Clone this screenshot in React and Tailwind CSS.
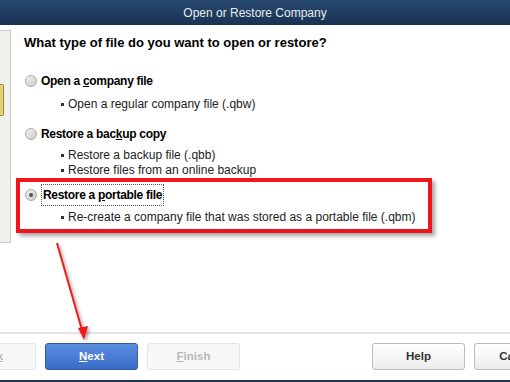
import React from 'react'

function Radio({ checked }) {
  return (
    <span className="w-[12px] h-[12px] rounded-full border border-[#a9a9a9] bg-gradient-to-br from-[#f4f4f4] to-[#c9c9c9] flex items-center justify-center shrink-0">
      {checked && <span className="w-[4px] h-[4px] rounded-full bg-[#555]" />}
    </span>
  )
}

function Bullet({ children }) {
  return (
    <div className="flex items-center gap-[4px] text-[12px] text-[#222] leading-[15px]">
      <span className="w-[3px] h-[3px] bg-[#333] inline-block" />
      <span>{children}</span>
    </div>
  )
}

function Btn({ children, variant, className }) {
  const base = 'h-[27px] rounded-[3px] flex items-center justify-center text-[11.5px] font-bold shrink-0'
  const styles = {
    primary: 'bg-gradient-to-b from-[#5b8ee0] to-[#3a6cc8] border border-[#2e5aa8] text-white',
    disabled: 'bg-[#f7f7f7] border border-[#e4e4e4] text-[#b8b8b8]',
    normal: 'bg-gradient-to-b from-[#ffffff] to-[#ececec] border border-[#bcbcbc] text-[#333]',
  }
  return <div className={`${base} ${styles[variant]} ${className || 'w-[93px]'}`}>{children}</div>
}

export default function App() {
  return (
    <div
      className="relative w-[510px] h-[382px] overflow-hidden bg-white flex flex-col"
      style={{ fontFamily: '"Liberation Sans", Arial, sans-serif' }}
    >
      <div className="h-[25px] shrink-0 bg-gradient-to-b from-[#284a70] to-[#1a3252] flex items-center justify-center text-[12px] text-[#e8ecf0]">
        Open or Restore Company
      </div>

      <div className="flex flex-1">
        <div className="w-[11px] h-[213px] mt-[5px] bg-[#eef1ec] border border-l-0 border-[#c9ccc6] relative shrink-0">
          <div className="absolute left-0 top-[53px] w-[4px] h-[32px] bg-[#e4cf7a] border border-l-0 border-[#9d8630] rounded-r-[2px]" />
        </div>

        <div className="flex flex-col pl-[5px]">
          <div className="pl-[8px] pt-[10px] text-[13px] font-bold text-black leading-[16px]">
            What type of file do you want to open or restore?
          </div>

          <div className="pl-[9px] mt-[21px] flex items-center gap-[4px]">
            <Radio />
            <span className="text-[12px] font-bold text-black tracking-[-0.3px]">
              Open a <u>c</u>ompany file
            </span>
          </div>
          <div className="pl-[45px] mt-[7px]">
            <Bullet>Open a regular company file (.qbw)</Bullet>
          </div>

          <div className="pl-[9px] mt-[13px] flex items-center gap-[4px]">
            <Radio />
            <span className="text-[12px] font-bold text-black tracking-[-0.3px]">
              Restore a bac<u>k</u>up copy
            </span>
          </div>
          <div className="pl-[45px] mt-[5px]">
            <Bullet>Restore a backup file (.qbb)</Bullet>
            <Bullet>Restore files from an online backup</Bullet>
          </div>

          <div className="mt-0 w-[416px] h-[55px] border-[4px] border-[#f0141c] shadow-[3px_3px_4px_rgba(0,0,0,0.35)] flex flex-col">
            <div className="pl-[5px] mt-[2px] flex items-center gap-[4px]">
              <Radio checked />
              <span className="text-[12px] font-bold text-black tracking-[-0.3px] border border-dotted border-[#555] px-[1px] h-[22px] leading-[20px]">
                Restore a <u>p</u>ortable file
              </span>
            </div>
            <div className="pl-[41px] mt-[4px]">
              <Bullet>Re-create a company file that was stored as a portable file (.qbm)</Bullet>
            </div>
          </div>
        </div>
      </div>

      <div className="h-[2px] bg-[#e6e2e2] mb-[9px]" />
      <div className="flex items-center gap-[9px] ml-[-57px] mb-[10px]">
        <Btn variant="disabled">
          <span>Bac<u>k</u></span>
        </Btn>
        <Btn variant="primary">
          <span><u>N</u>ext</span>
        </Btn>
        <Btn variant="disabled">
          <span><u>F</u>inish</span>
        </Btn>
        <div className="w-[114px] shrink-0" />
        <Btn variant="normal">Help</Btn>
        <Btn variant="normal" className="w-[88px]">Cancel</Btn>
      </div>
      <div className="h-[2px] bg-[#1c3450]" />

      <svg className="absolute left-0 top-0 pointer-events-none" width="510" height="382">
        <defs>
          <filter id="sh" x="-50%" y="-50%" width="200%" height="200%">
            <feDropShadow dx="2" dy="2" stdDeviation="1.5" floodColor="#000" floodOpacity="0.35" />
          </filter>
        </defs>
        <g filter="url(#sh)">
          <line x1="57" y1="243" x2="82" y2="330" stroke="#f01a1a" strokeWidth="2" />
          <polygon points="84,340 78,328 88,326" fill="#f01a1a" />
        </g>
      </svg>
    </div>
  )
}
